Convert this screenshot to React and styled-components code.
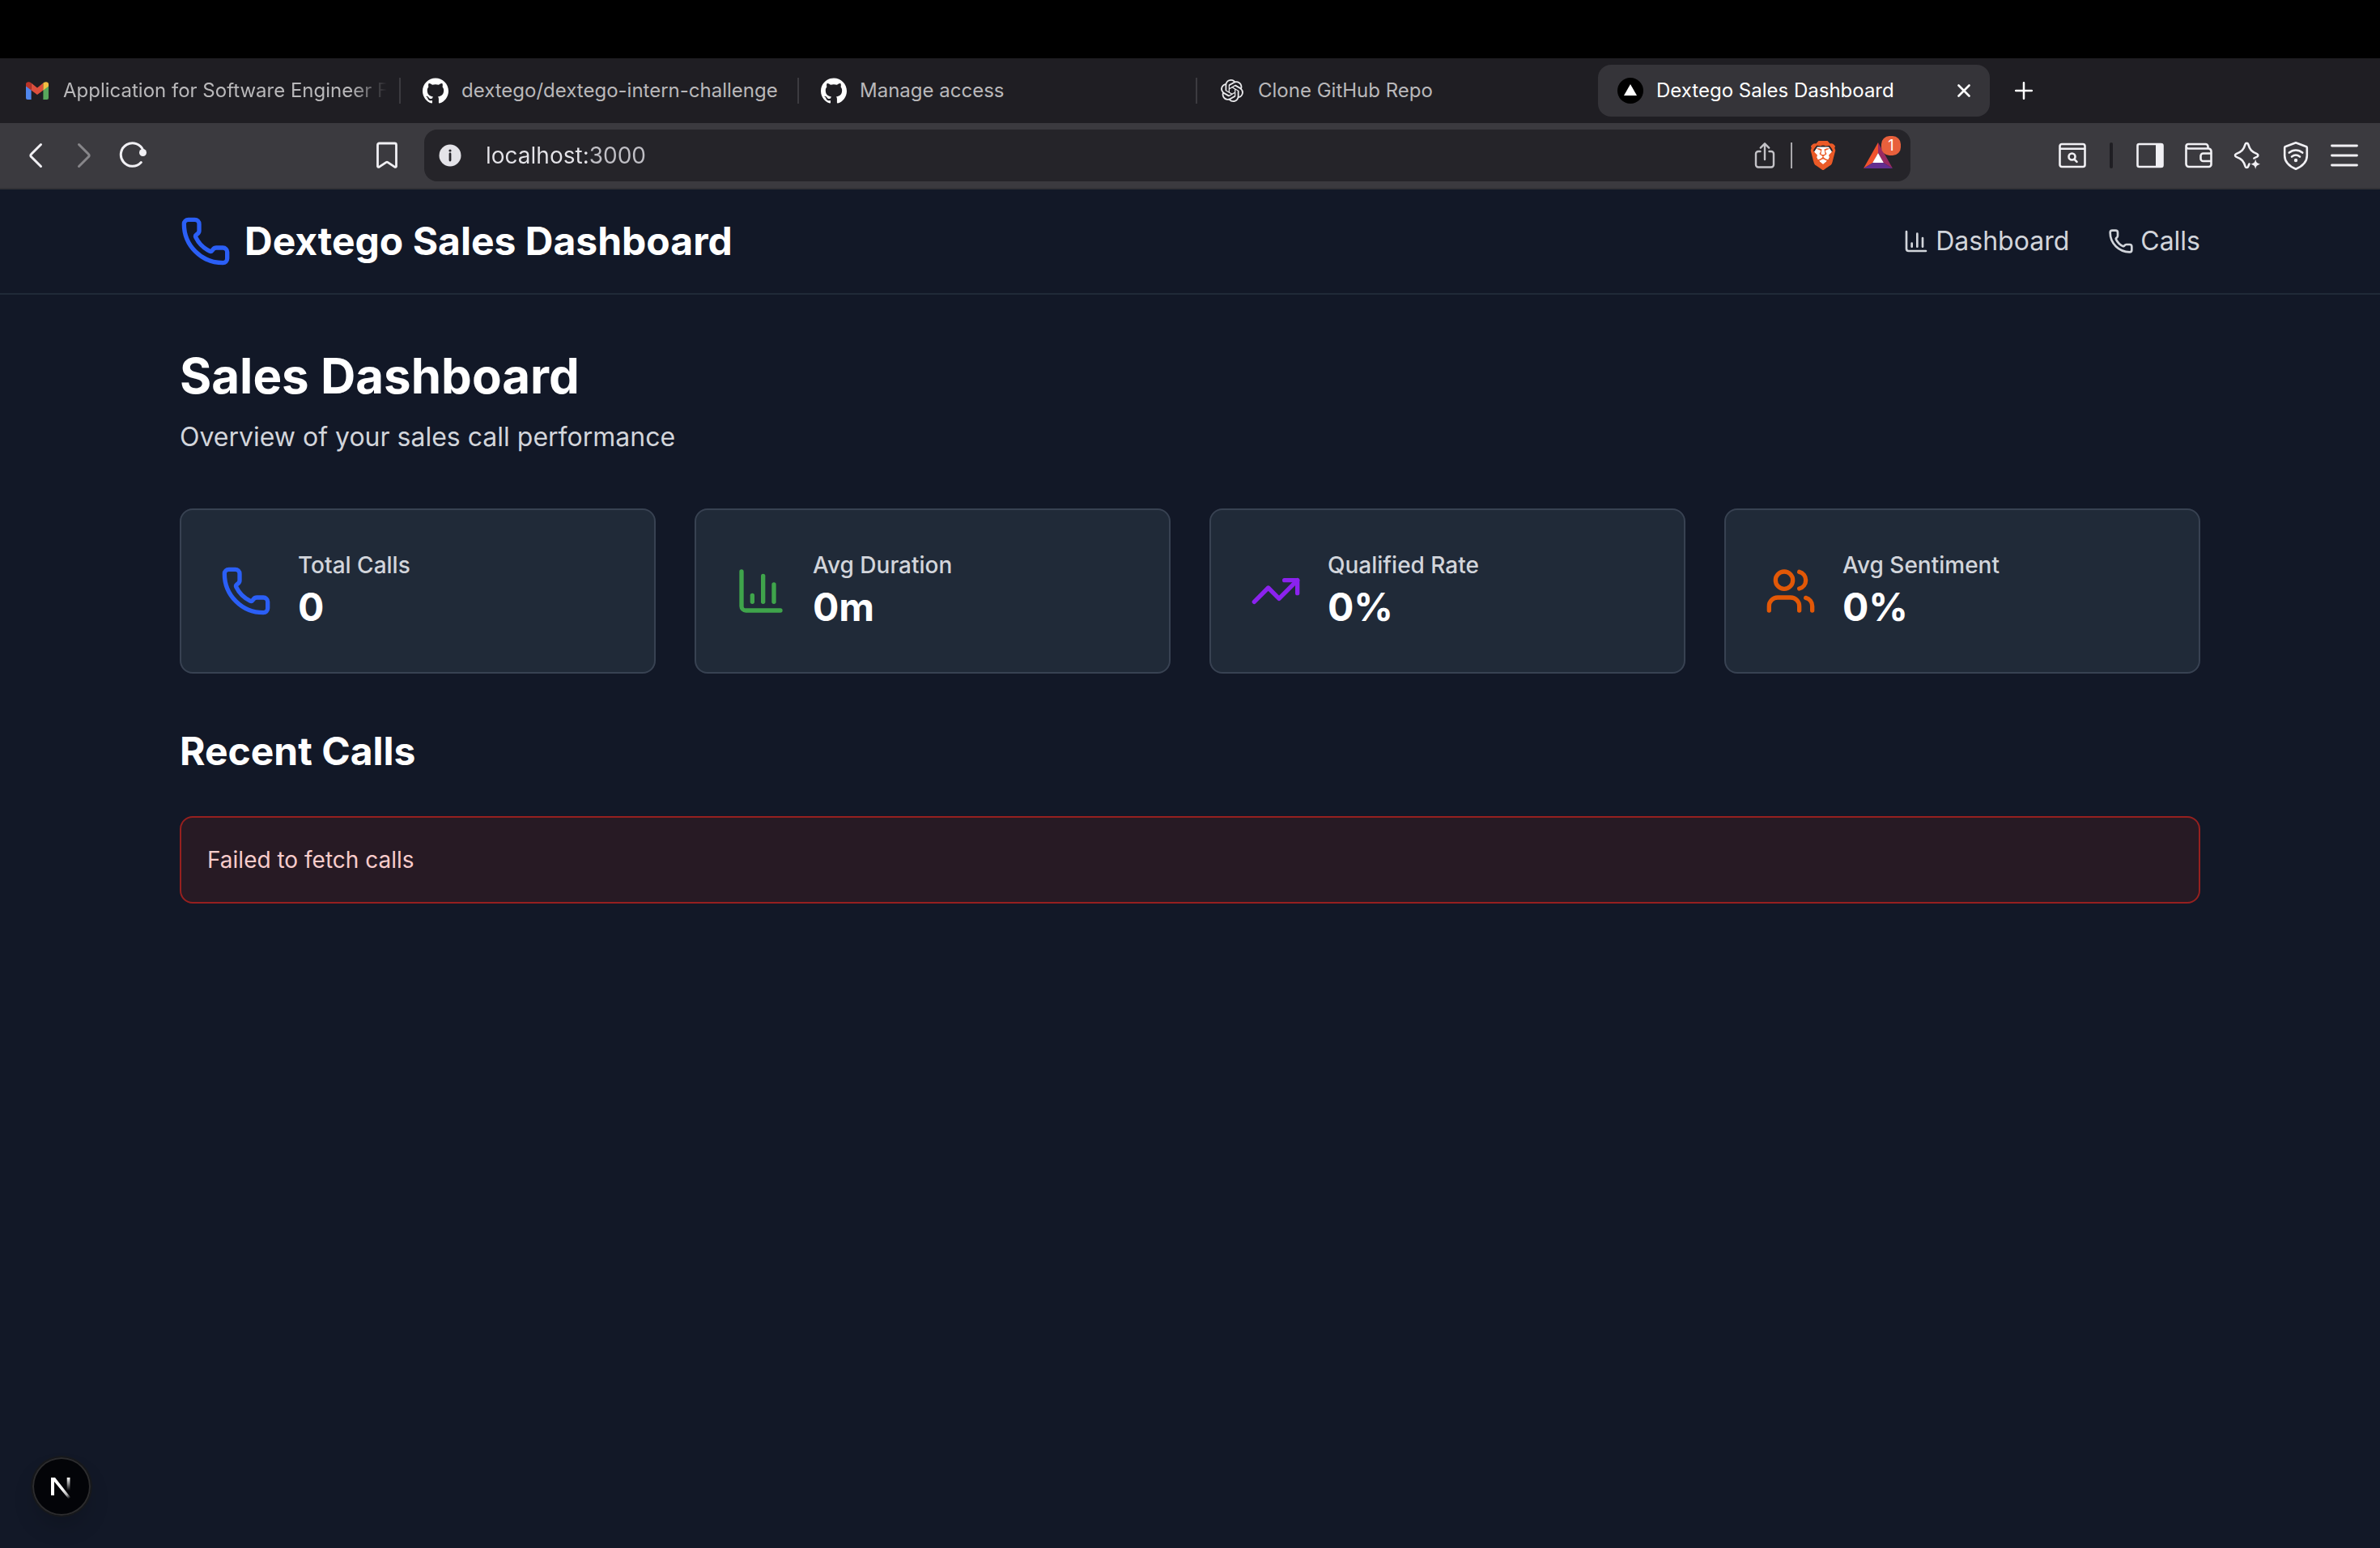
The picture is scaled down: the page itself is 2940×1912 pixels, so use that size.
import React from "react";
import styled, { createGlobalStyle } from "styled-components";
import { Phone, ChartColumn, TrendingUp, Users } from "lucide-react";
import { SiGithub, SiOpenai, SiBrave } from "react-icons/si";

const GlobalStyle = createGlobalStyle`
  *, *::before, *::after { box-sizing: border-box; }
  body { margin: 0; background: #121827; }
  h1, h2, p { margin: 0; }
  button { margin: 0; padding: 0; border: 0; background: none; color: inherit; font: inherit; }
  a { color: inherit; text-decoration: none; }
  svg { display: block; flex: none; }
`;

const Window = styled.div`
  display: flex;
  flex-direction: column;
  min-height: 100vh;
  font-family: Inter, "Liberation Sans", sans-serif;
  background: #121827;
`;

const MenuBarArea = styled.div`
  height: 72px;
  background: #000;
`;

/* ---------- Tab strip ---------- */

const TabStrip = styled.div`
  display: flex;
  align-items: center;
  height: 80px;
  padding-left: 6px;
  background: #1f1e23;
`;

const Tab = styled.div`
  display: flex;
  align-items: center;
  flex: 0 1 484px;
  min-width: 0;
  height: 64px;
  padding: 0 8px 0 24px;
  border-radius: 16px;
  background: ${(p) => (p.$active ? "#353439" : "transparent")};
  color: ${(p) => (p.$active ? "#ffffff" : "#b9b8ba")};
`;

const TabButton = styled.button`
  display: flex;
  align-items: center;
  flex: 1;
  min-width: 0;
  gap: 16px;
  font-size: 24px;
  line-height: 32px;
  text-align: left;
`;

const TabTitle = styled.span`
  flex: 1;
  min-width: 0;
  overflow: hidden;
  white-space: nowrap;
  mask-image: ${(p) =>
    p.$faded
      ? "linear-gradient(to right, #000 calc(100% - 48px), transparent calc(100% - 4px))"
      : "none"};
`;

const TabGap = styled.span`
  display: flex;
  justify-content: center;
  flex: 0 0 8px;
  &::after {
    content: "";
    width: 2px;
    height: 32px;
    background: ${(p) => (p.$line ? "#3c3b40" : "transparent")};
  }
`;

const SmallButton = styled.button`
  display: flex;
  align-items: center;
  justify-content: center;
  flex: none;
  width: ${(p) => p.$width}px;
  height: 32px;
  color: #fff;
`;

/* ---------- Toolbar ---------- */

const Toolbar = styled.div`
  display: flex;
  align-items: center;
  height: 82px;
  padding: 0 14px;
  background: #3b3a3f;
  border-bottom: 2px solid #323236;
`;

const ToolGroup = styled.div`
  display: flex;
  align-items: center;
`;

const ToolButton = styled.button`
  display: flex;
  align-items: center;
  justify-content: center;
  width: 60px;
  height: 64px;
  color: ${(p) => (p.$dim ? "#87868a" : "#f1f0f4")};
`;

const GroupDivider = styled.span`
  width: 4px;
  height: 32px;
  margin: 0 16px;
  border-radius: 2px;
  background: #1f1e23;
`;

const AddressArea = styled.div`
  display: flex;
  align-items: center;
  flex: 1;
  gap: 16px;
  margin: 0 170px 0 254px;
`;

const AddressBar = styled.div`
  display: flex;
  align-items: center;
  flex: 1;
  height: 64px;
  padding: 0 10px 0 18px;
  border-radius: 16px;
  background: #252429;
`;

const AddressInput = styled.input`
  flex: 1;
  min-width: 0;
  margin: 0 0 0 30px;
  padding: 0;
  border: 0;
  outline: 0;
  font: inherit;
  font-size: 28px;
  line-height: 40px;
  color: transparent;
  background: linear-gradient(to right, #e5e4e9 126px, #c0bfc5 126px) text;
`;

const AddressActions = styled.div`
  display: flex;
  align-items: center;
  height: 64px;
  color: #c3c2c7;
`;

const AddressButton = styled.button`
  display: flex;
  align-items: center;
  justify-content: center;
  width: ${(p) => p.$width}px;
  height: 48px;
`;

const AddressDivider = styled.span`
  width: 2px;
  height: 32px;
  background: #a9a8ac;
`;

const RewardsButton = styled(AddressButton)`
  position: relative;
`;

const Badge = styled.span`
  position: absolute;
  top: 0;
  right: 2px;
  width: 24px;
  height: 24px;
  border-radius: 10px;
  background: #e8603c;
  color: #fff;
  font-size: 18px;
  line-height: 24px;
  text-align: center;
`;

/* ---------- Page ---------- */

const Page = styled.div`
  flex: 1;
  color: #fff;
`;

const Container = styled.div`
  max-width: 2560px;
  margin: 0 auto;
  padding: 0 32px;
`;

const Header = styled.header`
  border-bottom: 2px solid #202a38;
`;

const HeaderRow = styled(Container)`
  display: flex;
  align-items: center;
  justify-content: space-between;
  height: 128px;
`;

const Brand = styled.a`
  display: flex;
  align-items: center;
  gap: 16px;
  font-size: 48px;
  line-height: 64px;
  font-weight: 700;
`;

const Nav = styled.nav`
  display: flex;
  gap: 48px;
`;

const NavLink = styled.a`
  display: flex;
  align-items: center;
  gap: 8px;
  font-size: 32px;
  line-height: 48px;
  color: #d2d5db;
`;

const Main = styled(Container).attrs({ as: "main" })`
  display: flex;
  flex-direction: column;
  gap: 64px;
  padding-top: 64px;
  padding-bottom: 64px;
`;

const PageTitle = styled.h1`
  font-size: 60px;
  line-height: 72px;
  font-weight: 700;
`;

const Subtitle = styled.p`
  margin-top: 16px;
  font-size: 32px;
  line-height: 48px;
  color: #d2d5db;
`;

const StatGrid = styled.section`
  display: grid;
  grid-template-columns: repeat(4, 1fr);
  gap: 48px;
`;

const StatCard = styled.div`
  display: flex;
  align-items: center;
  gap: 32px;
  padding: 48px;
  border: 2px solid #384252;
  border-radius: 16px;
  background: #202a38;
`;

const StatLabel = styled.p`
  font-size: 28px;
  line-height: 40px;
  font-weight: 500;
  color: #d2d5db;
`;

const StatValue = styled.p`
  font-size: 48px;
  line-height: 64px;
  font-weight: 700;
`;

const SectionTitle = styled.h2`
  margin-bottom: 48px;
  font-size: 48px;
  line-height: 64px;
  font-weight: 700;
`;

const Alert = styled.div`
  padding: 32px;
  border: 2px solid #96201f;
  border-radius: 16px;
  background: #271a24;
  color: #f8cccb;
  font-size: 28px;
  line-height: 40px;
`;

const DevButton = styled.button`
  position: fixed;
  left: 40px;
  bottom: 40px;
  display: flex;
  align-items: center;
  justify-content: center;
  width: 72px;
  height: 72px;
  border-radius: 50%;
  background: #030408;
  box-shadow: inset 0 0 0 2px #2c2c2e, 0 0 0 2px #16181c, 0 16px 32px -8px rgba(0, 0, 0, 0.24);
`;

/* ---------- Icons ---------- */

const Stroke = ({ size = 36, width = 3, children }) => (
  <svg
    width={size}
    height={size}
    viewBox="0 0 36 36"
    fill="none"
    stroke="currentColor"
    strokeWidth={width}
    strokeLinecap="round"
    strokeLinejoin="round"
    aria-hidden="true"
  >
    {children}
  </svg>
);

const GmailIcon = () => (
  <svg width="32" height="32" viewBox="0 0 32 32" aria-hidden="true">
    <path d="M2 9v16a2 2 0 0 0 2 2h4.600V14z" fill="#4f86ec" />
    <path d="M30 9v16a2 2 0 0 1-2 2h-4.600V14z" fill="#58a65c" />
    <path d="M8.600 6.600v8.800L16 21l7.400-5.600V6.600L16 12.400z" fill="#dc4f3d" />
    <path d="M2 8v2.600l6.600 4.800V6.600C6 4.500 2 4.800 2 8z" fill="#b93428" />
    <path d="M30 8v2.600l-6.600 4.800V6.600C26 4.500 30 4.800 30 8z" fill="#f2bd42" />
  </svg>
);

const VercelIcon = () => (
  <svg width="32" height="32" viewBox="0 0 32 32" aria-hidden="true">
    <circle cx="16" cy="16" r="16" fill="#000" />
    <path d="M16 8l8 14H8z" fill="#fff" />
  </svg>
);

const CloseIcon = () => (
  <svg width="16" height="16" viewBox="0 0 16 16" stroke="currentColor" strokeWidth="2.600" strokeLinecap="round" aria-hidden="true">
    <path d="M1.500 1.500l13 13M14.500 1.500l-13 13" />
  </svg>
);

const PlusIcon = () => (
  <svg width="22" height="22" viewBox="0 0 22 22" stroke="currentColor" strokeWidth="2.500" strokeLinecap="round" aria-hidden="true">
    <path d="M11 1.200v19.600M1.200 11h19.600" />
  </svg>
);

const BackIcon = () => (
  <Stroke>
    <path d="M24.500 4.500L12.500 16.500a2 2 0 0 0 0 3l12 12" />
  </Stroke>
);

const ForwardIcon = () => (
  <Stroke>
    <path d="M11.500 4.500l12 12a2 2 0 0 1 0 3l-12 12" />
  </Stroke>
);

const ReloadIcon = () => (
  <Stroke>
    <path d="M28.300 26.500A14.300 14.300 0 1 1 31 12" />
    <circle cx="30.500" cy="14.500" r="4.500" fill="currentColor" stroke="none" />
  </Stroke>
);

const BookmarkIcon = () => (
  <Stroke width={2.8}>
    <path d="M6.500 5a2 2 0 0 1 2-2h19a2 2 0 0 1 2 2v26.500a1.300 1.300 0 0 1-2 .7L18.800 26.400a1.500 1.500 0 0 0-1.600 0L8.500 32.200a1.300 1.300 0 0 1-2-.7z" />
  </Stroke>
);

const InfoIcon = () => (
  <svg width="28" height="28" viewBox="0 0 28 28" aria-hidden="true">
    <circle cx="14" cy="14" r="13.500" fill="#e4e3e8" />
    <circle cx="14" cy="8" r="1.600" fill="#252429" />
    <path d="M14 12v8" stroke="#252429" strokeWidth="2.800" strokeLinecap="round" />
  </svg>
);

const ShareIcon = () => (
  <Stroke width={2.4}>
    <path d="M12.500 13H10a3 3 0 0 0-3 3v13.500a3 3 0 0 0 3 3h16a3 3 0 0 0 3-3V16a3 3 0 0 0-3-3h-2.500" />
    <path d="M18 23V3.500M12.800 8.600L18 3.300l5.200 5.300" />
  </Stroke>
);

const BraveIcon = () => (
  <svg width="36" height="36" viewBox="0 0 36 36" aria-hidden="true">
    <path d="M11 7.500h14l4 6-4 9-7 8-7-8-4-9z" fill="#fff" />
    <SiBrave x="0" y="0" size={36} color="#eb5a27" />
  </svg>
);

const RewardsIcon = () => (
  <svg width="36" height="32" viewBox="0 0 36 32" aria-hidden="true">
    <path d="M18 0v13l-6.500 12L0 32z" fill="#f0522c" />
    <path d="M18 0l18 32-11.500-7L18 13z" fill="#992a62" />
    <path d="M0 32l11.500-7h13L36 32z" fill="#622e90" />
    <path d="M18 13l6.800 12H11.200z" fill="#fff" />
  </svg>
);

const SearchTabIcon = () => (
  <Stroke width={2.6}>
    <rect x="2.500" y="4" width="31" height="28" rx="2.500" />
    <path d="M3 9.700h30" />
    <circle cx="17.500" cy="19.500" r="4" />
    <path d="M20.500 22.800l3 3" />
  </Stroke>
);

const SidePanelIcon = () => (
  <Stroke width={2.6}>
    <rect x="2.500" y="4" width="31" height="28" rx="2" />
    <path d="M25 3.500h7.500a1.500 1.500 0 0 1 1.500 1.500v26a1.500 1.500 0 0 1-1.500 1.500H25z" fill="currentColor" stroke="none" />
  </Stroke>
);

const WalletIcon = () => (
  <Stroke width={2.6}>
    <path d="M29.500 9.500V7A3 3 0 0 0 26.500 4H5A2.500 2.500 0 0 0 2.500 6.500v22A3.500 3.500 0 0 0 6 32h24.500a3 3 0 0 0 3-3V13a3.500 3.500 0 0 0-3.500-3.500H5.500a3 3 0 0 1-3-3" />
    <path d="M33 15.500h-9.500a3 3 0 0 0-3 3v3.500a3 3 0 0 0 3 3H33" />
  </Stroke>
);

const SparkleIcon = () => (
  <Stroke width={2.6}>
    <path d="M20.500 28.500c-.6 1.400-.9 2.300-1.300 3.200a1.900 1.900 0 0 1-3.600 0c-1.900-6.500-4.400-9.600-11.400-12.100a1.900 1.900 0 0 1 0-3.500c6.900-2.600 9.500-5.400 11.400-12a1.900 1.900 0 0 1 3.600 0c1.900 6.600 4.200 9.400 11 12a1.900 1.900 0 0 1 0 3.500c-1.500.6-2.700 1.200-3.800 1.900" />
    <path d="M28.200 22.500c.8 4 1.800 5 5.800 6.300-4 1.200-5 2.200-5.800 6.200-.8-4-1.800-5-5.800-6.200 4-1.300 5-2.300 5.800-6.300z" fill="currentColor" stroke="none" />
  </Stroke>
);

const VpnIcon = () => (
  <Stroke width={2.6}>
    <path d="M18 2.200l12 4.500a2 2 0 0 1 1.800 2v9.500c0 8-6.800 13.500-13.800 16.600C11 31.700 4.200 26.200 4.200 18.200V8.700A2 2 0 0 1 6 6.700z" />
    <path d="M9.800 14.600c4.800-4.200 11.600-4.200 16.400 0M13 19.500c3-2.400 7-2.400 10 0" />
    <circle cx="18" cy="24" r="2.200" fill="currentColor" stroke="none" />
  </Stroke>
);

const MenuIcon = () => (
  <Stroke width={2.8}>
    <path d="M2.500 6h31M2.500 18h31M2.500 30h31" />
  </Stroke>
);

const NextIcon = () => (
  <svg width="28" height="30" viewBox="0 0 28 30" fill="none" aria-hidden="true">
    <defs>
      <linearGradient id="diagonal" gradientUnits="userSpaceOnUse" x1="16" y1="17" x2="25" y2="29">
        <stop offset="0" stopColor="#fff" />
        <stop offset="0.600" stopColor="#fff" stopOpacity="0.700" />
        <stop offset="1" stopColor="#fff" stopOpacity="0" />
      </linearGradient>
      <linearGradient id="stem" gradientUnits="userSpaceOnUse" x1="23" y1="4" x2="23" y2="20">
        <stop offset="0" stopColor="#fff" />
        <stop offset="1" stopColor="#fff" stopOpacity="0" />
      </linearGradient>
    </defs>
    <path d="M1 4h5l20 25.500-2.800 1.500L5 9v17H1z" fill="url(#diagonal)" />
    <path d="M20.700 4h3.800v16h-3.800z" fill="url(#stem)" />
  </svg>
);

const OpenAiIcon = () => (
  <svg width="32" height="32" viewBox="0 0 32 32" aria-hidden="true">
    <SiOpenai x="2" y="2" size={28} color="#e8e8ea" />
  </svg>
);

/* ---------- Data ---------- */

const tabs = [
  { title: "Application for Software Engineer F", icon: <GmailIcon />, faded: true },
  { title: "dextego/dextego-intern-challenge", icon: <SiGithub size={32} color="#fff" /> },
  { title: "Manage access", icon: <SiGithub size={32} color="#fff" /> },
  { title: "Clone GitHub Repo", icon: <OpenAiIcon /> },
  { title: "Dextego Sales Dashboard", icon: <VercelIcon />, active: true },
];

const stats = [
  { label: "Total Calls", value: "0", Icon: Phone, color: "#2b5ff6" },
  { label: "Avg Duration", value: "0m", Icon: ChartColumn, color: "#3fa44b" },
  { label: "Qualified Rate", value: "0%", Icon: TrendingUp, color: "#8b22ee" },
  { label: "Avg Sentiment", value: "0%", Icon: Users, color: "#e25807" },
];

const sideTools = [
  { label: "Sidebar", Icon: SidePanelIcon },
  { label: "Wallet", Icon: WalletIcon },
  { label: "Leo AI", Icon: SparkleIcon },
  { label: "VPN", Icon: VpnIcon },
  { label: "Menu", Icon: MenuIcon },
];

export default function App() {
  return (
    <Window>
      <GlobalStyle />
      <MenuBarArea />
      <TabStrip>
        {tabs.map((tab, i) => (
          <React.Fragment key={tab.title}>
            {i > 0 && <TabGap $line={!tab.active} />}
            <Tab $active={tab.active}>
              <TabButton type="button">
                {tab.icon}
                <TabTitle $faded={tab.faded}>{tab.title}</TabTitle>
              </TabButton>
              {tab.active && (
                <SmallButton type="button" $width={48} aria-label="Close tab">
                  <CloseIcon />
                </SmallButton>
              )}
            </Tab>
          </React.Fragment>
        ))}
        <SmallButton type="button" $width={84} aria-label="New tab">
          <PlusIcon />
        </SmallButton>
      </TabStrip>

      <Toolbar>
        <ToolGroup>
          <ToolButton type="button" aria-label="Back"><BackIcon /></ToolButton>
          <ToolButton type="button" aria-label="Forward" $dim><ForwardIcon /></ToolButton>
          <ToolButton type="button" aria-label="Reload"><ReloadIcon /></ToolButton>
        </ToolGroup>
        <AddressArea>
          <ToolButton type="button" aria-label="Bookmark"><BookmarkIcon /></ToolButton>
          <AddressBar>
            <InfoIcon />
            <AddressInput type="text" aria-label="Address" defaultValue="localhost:3000" />
            <AddressActions>
              <AddressButton type="button" $width={64} aria-label="Share"><ShareIcon /></AddressButton>
              <AddressDivider />
              <AddressButton type="button" $width={76} aria-label="Brave Shields"><BraveIcon /></AddressButton>
              <RewardsButton type="button" $width={60} aria-label="Brave Rewards">
                <RewardsIcon />
                <Badge>1</Badge>
              </RewardsButton>
            </AddressActions>
          </AddressBar>
        </AddressArea>
        <ToolGroup>
          <ToolButton type="button" aria-label="Search tabs"><SearchTabIcon /></ToolButton>
          <GroupDivider />
          {sideTools.map(({ label, Icon }) => (
            <ToolButton key={label} type="button" aria-label={label}>
              <Icon />
            </ToolButton>
          ))}
        </ToolGroup>
      </Toolbar>

      <Page>
        <Header>
          <HeaderRow>
            <Brand href="#">
              <Phone size={64} color="#2b5ff6" />
              Dextego Sales Dashboard
            </Brand>
            <Nav>
              <NavLink href="#dashboard">
                <ChartColumn size={32} />
                Dashboard
              </NavLink>
              <NavLink href="#calls">
                <Phone size={32} />
                Calls
              </NavLink>
            </Nav>
          </HeaderRow>
        </Header>
        <Main>
          <div>
            <PageTitle>Sales Dashboard</PageTitle>
            <Subtitle>Overview of your sales call performance</Subtitle>
          </div>
          <StatGrid>
            {stats.map(({ label, value, Icon, color }) => (
              <StatCard key={label}>
                <Icon size={64} color={color} />
                <div>
                  <StatLabel>{label}</StatLabel>
                  <StatValue>{value}</StatValue>
                </div>
              </StatCard>
            ))}
          </StatGrid>
          <section>
            <SectionTitle>Recent Calls</SectionTitle>
            <Alert role="alert">Failed to fetch calls</Alert>
          </section>
        </Main>
      </Page>

      <DevButton type="button" aria-label="Open Next.js Dev Tools">
        <NextIcon />
      </DevButton>
    </Window>
  );
}
